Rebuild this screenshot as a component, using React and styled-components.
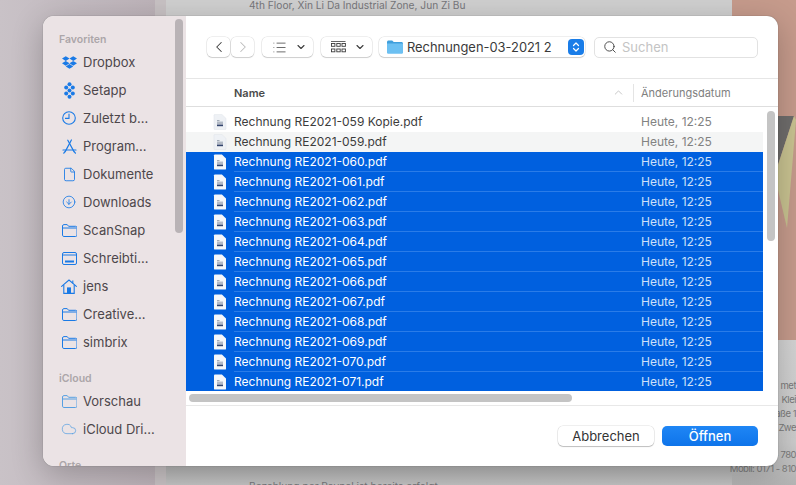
import React from 'react';
import styled, { createGlobalStyle } from 'styled-components';
import { Search, ChevronLeft, ChevronRight, ChevronDown, ChevronUp, ChevronsUpDown, File, CircleArrowDown, Cloud, List } from 'lucide-react';
import { FaDropbox } from 'react-icons/fa';

const GlobalStyle = createGlobalStyle`
  html, body {
    margin: 0;
    padding: 0;
    width: 796px;
    height: 485px;
    overflow: hidden;
    font-family: Inter, "Liberation Sans", sans-serif;
  }
  * { box-sizing: border-box; }
`;

const Desktop = styled.div`
  position: relative;
  display: flex;
  width: 796px;
  height: 485px;
  overflow: hidden;
  background: #c4bbc1;
`;

const LeftBlur = styled.div`
  width: 155px;
  background: linear-gradient(90deg, #c9c2c7 0%, #c2b9bf 60%, #bdb3b9 100%);
`;

const SideStrip = styled.div`
  width: 11px;
  background: #c8c2c4;
`;

const Paper = styled.div`
  flex: 1;
  display: flex;
  flex-direction: column;
  justify-content: space-between;
  padding: 0 0 0 83px;
  background: linear-gradient(180deg, #d0d0d0 0%, #cfcfcf 85%, #b4b4b4 96%, #c4c4c4 100%);
  font-size: 10.2px;
  line-height: 14px;
  color: #77777b;
`;

const PaperLine = styled.div`
  margin-top: ${(props) => (props.$bottom ? '0' : '-2px')};
  margin-bottom: ${(props) => (props.$bottom ? '-8px' : '0')};
  white-space: nowrap;
`;

const RightColumn = styled.div`
  width: 64px;
  display: flex;
  flex-direction: column;
`;

const Poster = styled.div`
  height: 340px;
  background: #c69b8c;
  svg { display: block; }
`;

const Imprint = styled.div`
  flex: 1;
  display: flex;
  flex-direction: column;
  align-items: flex-end;
  padding-top: 39px;
  background: linear-gradient(180deg, #d4d4d4 0%, #cdcdcd 70%, #b4b4b4 100%);
  font-size: 9.5px;
  line-height: 14px;
  letter-spacing: -0.5px;
  color: #7b7b7b;
  white-space: nowrap;
`;

const ImprintGap = styled.div`
  height: 13px;
`;

const Dialog = styled.div`
  position: absolute;
  left: 43px;
  top: 16px;
  width: 735px;
  height: 450px;
  display: flex;
  border-radius: 11px;
  overflow: hidden;
  background: #fff;
  box-shadow: 0 0 1px rgba(0, 0, 0, 0.5), 0 8px 32px rgba(0, 0, 0, 0.24);
`;

const Sidebar = styled.div`
  position: relative;
  width: 143px;
  flex-shrink: 0;
  padding: 18px 0 0 18px;
  overflow: hidden;
  background: #ebe3e5;
`;

const SidebarThumb = styled.div`
  position: absolute;
  right: 3px;
  top: 3px;
  width: 8px;
  height: 214px;
  border-radius: 4px;
  background: #b9b3b6;
`;

const SectionLabel = styled.div`
  height: 14px;
  margin-left: -2px;
  font-size: 10.5px;
  line-height: 12px;
  font-weight: 600;
  color: #aca6a9;
`;

const Group = styled.div`
  display: flex;
  flex-direction: column;
  margin-bottom: 17px;
`;

const SideItem = styled.div`
  display: flex;
  align-items: center;
  gap: 6px;
  height: 28px;
  font-size: 13px;
  color: #4d474b;
  white-space: nowrap;
`;

const SideIcon = styled.span`
  width: 16px;
  height: 16px;
  display: flex;
  align-items: center;
  justify-content: center;
  color: ${(props) => (props.$muted ? '#58a0e2' : '#1a7ae6')};
  svg { display: block; flex-shrink: 0; }
`;

const Main = styled.div`
  flex: 1;
  display: flex;
  flex-direction: column;
  min-width: 0;
`;

const Toolbar = styled.div`
  display: flex;
  align-items: center;
  height: 63px;
  padding: 0 20px 0 21px;
  border-bottom: 1px solid #e6e6e6;
`;

const ToolButton = styled.div`
  display: flex;
  align-items: center;
  justify-content: ${(props) => (props.$between ? 'space-between' : 'center')};
  width: ${(props) => props.$width}px;
  height: 20px;
  margin-right: ${(props) => props.$gap || 0}px;
  padding: ${(props) => (props.$between ? '0 6px 0 10px' : '0')};
  border-radius: 5px;
  background: #fff;
  box-shadow: 0 0 0 0.5px rgba(0, 0, 0, 0.13), 0 1px 1px rgba(0, 0, 0, 0.14);
  color: ${(props) => (props.$dim ? '#bcbcbc' : '#3c3c3c')};
`;

const PathPopup = styled.div`
  display: flex;
  align-items: center;
  width: 206px;
  height: 20px;
  margin-right: 9px;
  padding: 0 1px 0 8px;
  border-radius: 5px;
  background: #fff;
  box-shadow: 0 0 0 0.5px rgba(0, 0, 0, 0.13), 0 1px 1px rgba(0, 0, 0, 0.14);
  font-size: 12.9px;
  color: #3a3a3a;
  white-space: nowrap;
`;

const PathName = styled.span`
  flex: 1;
  margin-left: 4px;
`;

const Stepper = styled.span`
  width: 16px;
  height: 16px;
  display: flex;
  align-items: center;
  justify-content: center;
  border-radius: 4px;
  background: #1a7de8;
  color: #fff;
`;

const SearchBox = styled.div`
  display: flex;
  align-items: center;
  gap: 5px;
  width: 164px;
  height: 21px;
  padding-left: 8px;
  border-radius: 5px;
  border: 1px solid #e2e2e2;
  font-size: 13px;
  color: #c4c4c4;
  background: #fff;
`;

const ColumnHeader = styled.div`
  display: flex;
  align-items: center;
  height: 28px;
  padding-left: 48px;
  border-bottom: 1px solid #dedede;
  font-size: 11px;
`;

const NameHead = styled.div`
  flex: 1;
  font-weight: 600;
  color: #4a4a4a;
`;

const SortArrow = styled.span`
  display: flex;
  margin-right: 8px;
  color: #aaaaaa;
`;

const DateHead = styled.div`
  width: 145px;
  height: 18px;
  padding-left: 7px;
  line-height: 18px;
  border-left: 1px solid #e4e4e4;
  color: #808080;
`;

const ListArea = styled.div`
  position: relative;
  height: 299px;
  padding: 5px 0 15px 0;
  overflow: hidden;
  border-bottom: 1px solid #e8e8e8;
`;

const Rows = styled.div`
  width: 577px;
  height: 279px;
  overflow: hidden;
`;

const Row = styled.div`
  display: flex;
  height: 20px;
  background: ${(props) => (props.$selected ? '#0060df' : props.$alt ? '#f4f5f5' : '#fff')};
  color: ${(props) => (props.$selected ? '#fff' : '#3c3c3c')};
`;

const FileIconCell = styled.div`
  width: 48px;
  padding: 2px 0 0 27px;
  svg { display: block; }
`;

const RowBody = styled.div`
  flex: 1;
  display: flex;
  align-items: center;
  font-size: 12px;
  border-bottom: 1px solid ${(props) => (props.$selected ? '#2a7ce8' : 'transparent')};
`;

const RowName = styled.div`
  flex: 1;
  white-space: nowrap;
`;

const RowDate = styled.div`
  width: 122px;
  color: ${(props) => (props.$selected ? '#cfe0f8' : '#828282')};
`;

const VerticalThumb = styled.div`
  position: absolute;
  right: 3px;
  top: 4px;
  width: 8px;
  height: 130px;
  border-radius: 4px;
  background: #c4c4c4;
`;

const HorizontalThumb = styled.div`
  position: absolute;
  left: 3px;
  bottom: 3px;
  width: 383px;
  height: 8px;
  border-radius: 4px;
  background: #c4c4c4;
`;

const Footer = styled.div`
  flex: 1;
  display: flex;
  align-items: flex-start;
  justify-content: flex-end;
  gap: 8px;
  padding: 20px 20px 0 0;
`;

const Button = styled.div`
  width: 96px;
  height: 20px;
  display: flex;
  align-items: center;
  justify-content: center;
  border-radius: 5px;
  font-size: 13px;
  font-weight: ${(props) => (props.$primary ? 500 : 400)};
  color: ${(props) => (props.$primary ? '#fff' : '#333')};
  background: ${(props) => (props.$primary ? 'linear-gradient(180deg, #1f86f5, #0e74ea)' : '#fff')};
  box-shadow: ${(props) => (props.$primary ? 'none' : '0 0 0 0.5px rgba(0,0,0,0.13), 0 1px 1px rgba(0,0,0,0.2)')};
`;

const SetappIcon = () => (
  <svg width="11" height="17" viewBox="0 0 11 17" fill="currentColor">
    <circle cx="5.5" cy="2.2" r="2" />
    <circle cx="2.2" cy="5.4" r="2" />
    <circle cx="8.8" cy="5.4" r="2" />
    <circle cx="5.5" cy="8.5" r="2" />
    <circle cx="2.2" cy="11.6" r="2" />
    <circle cx="8.8" cy="11.6" r="2" />
    <circle cx="5.5" cy="14.8" r="2" />
  </svg>
);

const ClockIcon = () => (
  <svg width="14" height="14" viewBox="0 0 14 14" fill="none" stroke="currentColor" strokeWidth="1.1">
    <circle cx="7" cy="7" r="6.3" />
    <path d="M7 2.8V7.4H3" />
  </svg>
);

const AppsIcon = () => (
  <svg width="15" height="15" viewBox="0 0 15 15" fill="none" stroke="currentColor" strokeWidth="1.2" strokeLinecap="round">
    <path d="M9.4 1 3.2 12.6" />
    <path d="M5.8 1.2 12 12.6" />
    <path d="M1 11h13" />
    <path d="M2.8 12.8 1.8 14.2" />
    <path d="M12.4 12.8 13.4 14.2" />
  </svg>
);

const HomeIcon = () => (
  <svg width="16" height="15" viewBox="0 0 16 15" fill="none" stroke="currentColor" strokeWidth="1.1">
    <path d="M.6 7.4 8 1l7.4 6.4" strokeLinecap="round" />
    <path d="M2.8 6v8.4h10.4V6" />
    <rect x="6" y="8.4" width="4" height="6" fill="currentColor" stroke="none" />
    <path d="M11.8 1.6v2.6" />
  </svg>
);

const FolderIcon = () => (
  <svg width="15" height="13" viewBox="0 0 15 13" fill="none" stroke="currentColor" strokeWidth="1">
    <path d="M.5 2c0-.8.6-1.4 1.4-1.4h3.3l1.4 1.7h7c.6 0 1.4.4 1.4 1.2v7.7c0 .8-.6 1.3-1.4 1.3H1.9c-.8 0-1.4-.5-1.4-1.3z" />
    <path d="M.5 4h14" />
  </svg>
);

const DesktopIcon = () => (
  <svg width="15" height="13" viewBox="0 0 15 13" fill="none" stroke="currentColor" strokeWidth="1">
    <rect x=".5" y=".5" width="14" height="12" rx="1.5" />
    <path d="M.5 3h14" />
    <rect x="3" y="8.5" width="9" height="2" fill="currentColor" stroke="none" />
  </svg>
);

const BigFolder = () => (
  <svg width="16" height="14" viewBox="0 0 16 14">
    <path d="M0 2C0 1 .7.4 1.6.4h3.6l1.5 1.5h7.7c1 0 1.6.6 1.6 1.6V5H0z" fill="#3f9fdc" />
    <path d="M0 3.6h16v8.8c0 .9-.7 1.4-1.6 1.4H1.6C.7 13.8 0 13.3 0 12.4z" fill="#6cc0f2" />
  </svg>
);

const GridIcon = () => (
  <svg width="15" height="12" viewBox="0 0 15 12" fill="none" stroke="currentColor" strokeWidth="0.9">
    <path d="M0 .5h14.5" strokeWidth="0.8" />
    <rect x=".5" y="2.5" width="3.4" height="2.8" />
    <rect x="5.8" y="2.5" width="3.4" height="2.8" />
    <rect x="11" y="2.5" width="3.4" height="2.8" />
    <rect x=".5" y="8" width="3.4" height="2.8" />
    <rect x="5.8" y="8" width="3.4" height="2.8" />
    <rect x="11" y="8" width="3.4" height="2.8" />
  </svg>
);

const PdfIcon = ({ selected }) => (
  <svg width="14" height="16" viewBox="0 0 14 16">
    <path d="M1 1.2C1 .7 1.4.4 1.9.4h7L13 4.4v10.3c0 .5-.4.9-.9.9H1.9c-.5 0-.9-.4-.9-.9z" fill={selected ? '#f6f8fb' : '#eef1f5'} stroke={selected ? 'none' : '#dfe3e8'} strokeWidth="0.5" />
    <path d="M4 6.6h2.5M4 8.2h6M4 9.8h6" stroke="#8d97a8" strokeWidth="0.9" />
    <rect x="4" y="10.6" width="6" height="1.6" fill="#33456d" />
  </svg>
);

const favorites = [
  { label: 'Dropbox', icon: <FaDropbox size={15} /> },
  { label: 'Setapp', icon: <SetappIcon /> },
  { label: 'Zuletzt b...', icon: <ClockIcon /> },
  { label: 'Program...', icon: <AppsIcon /> },
  { label: 'Dokumente', icon: <File size={15} strokeWidth={1.4} /> },
  { label: 'Downloads', icon: <CircleArrowDown size={14} strokeWidth={1.4} /> },
  { label: 'ScanSnap', icon: <FolderIcon /> },
  { label: 'Schreibti...', icon: <DesktopIcon /> },
  { label: 'jens', icon: <HomeIcon /> },
  { label: 'Creative...', icon: <FolderIcon /> },
  { label: 'simbrix', icon: <FolderIcon /> },
];

const cloud = [
  { label: 'Vorschau', icon: <FolderIcon /> },
  { label: 'iCloud Dri...', icon: <Cloud size={16} strokeWidth={1.1} /> },
];

const files = [
  'Rechnung RE2021-059 Kopie.pdf',
  'Rechnung RE2021-059.pdf',
  'Rechnung RE2021-060.pdf',
  'Rechnung RE2021-061.pdf',
  'Rechnung RE2021-062.pdf',
  'Rechnung RE2021-063.pdf',
  'Rechnung RE2021-064.pdf',
  'Rechnung RE2021-065.pdf',
  'Rechnung RE2021-066.pdf',
  'Rechnung RE2021-067.pdf',
  'Rechnung RE2021-068.pdf',
  'Rechnung RE2021-069.pdf',
  'Rechnung RE2021-070.pdf',
  'Rechnung RE2021-071.pdf',
];

const App = () => {
  return (
    <Desktop>
      <GlobalStyle />
      <LeftBlur />
      <SideStrip />
      <Paper>
        <PaperLine>4th Floor, Xin Li Da Industrial Zone, Jun Zi Bu</PaperLine>
        <PaperLine $bottom>Bezahlung per Paypal ist bereits erfolgt</PaperLine>
      </Paper>
      <RightColumn>
        <Poster>
          <svg width="64" height="340" viewBox="0 0 64 340">
            <path d="M40 116h22L46 165H40z" fill="#6f6d6c" />
            <path d="M62 116 46 165v25l9 38 9-108z" fill="#c9c391" />
          </svg>
        </Poster>
        <Imprint>
          <span>met</span>
          <span>Klei</span>
          <span>aße 1</span>
          <span>Zwe</span>
          <ImprintGap />
          <span>- 780</span>
          <span>Mobil: 0171 - 810</span>
        </Imprint>
      </RightColumn>

      <Dialog>
        <Sidebar>
          <SidebarThumb />
          <SectionLabel>Favoriten</SectionLabel>
          <Group>
            {favorites.map((item) => (
              <SideItem key={item.label}>
                <SideIcon>{item.icon}</SideIcon>
                {item.label}
              </SideItem>
            ))}
          </Group>
          <SectionLabel>iCloud</SectionLabel>
          <Group>
            {cloud.map((item) => (
              <SideItem key={item.label}>
                <SideIcon $muted>{item.icon}</SideIcon>
                {item.label}
              </SideItem>
            ))}
          </Group>
          <SectionLabel>Orte</SectionLabel>
        </Sidebar>

        <Main>
          <Toolbar>
            <ToolButton $width={23} $gap={1}><ChevronLeft size={18} strokeWidth={1.4} /></ToolButton>
            <ToolButton $width={23} $gap={8} $dim><ChevronRight size={18} strokeWidth={1.4} /></ToolButton>
            <ToolButton $width={51} $gap={8} $between>
              <List size={15} strokeWidth={1.2} />
              <ChevronDown size={12} strokeWidth={2.2} />
            </ToolButton>
            <ToolButton $width={51} $gap={7} $between>
              <GridIcon />
              <ChevronDown size={12} strokeWidth={2.2} />
            </ToolButton>
            <PathPopup>
              <BigFolder />
              <PathName>Rechnungen-03-2021 2</PathName>
              <Stepper><ChevronsUpDown size={12} strokeWidth={2.4} /></Stepper>
            </PathPopup>
            <SearchBox>
              <Search size={14} color="#444" strokeWidth={1.6} />
              Suchen
            </SearchBox>
          </Toolbar>

          <ColumnHeader>
            <NameHead>Name</NameHead>
            <SortArrow><ChevronUp size={13} strokeWidth={1.2} /></SortArrow>
            <DateHead>Änderungsdatum</DateHead>
          </ColumnHeader>

          <ListArea>
            <Rows>
              {files.map((name, index) => {
                const selected = index > 1;
                return (
                  <Row key={name} $selected={selected} $alt={index === 1}>
                    <FileIconCell><PdfIcon selected={selected} /></FileIconCell>
                    <RowBody $selected={selected}>
                      <RowName>{name}</RowName>
                      <RowDate $selected={selected}>Heute, 12:25</RowDate>
                    </RowBody>
                  </Row>
                );
              })}
            </Rows>
            <VerticalThumb />
            <HorizontalThumb />
          </ListArea>

          <Footer>
            <Button>Abbrechen</Button>
            <Button $primary>Öffnen</Button>
          </Footer>
        </Main>
      </Dialog>
    </Desktop>
  );
};

export default App;
